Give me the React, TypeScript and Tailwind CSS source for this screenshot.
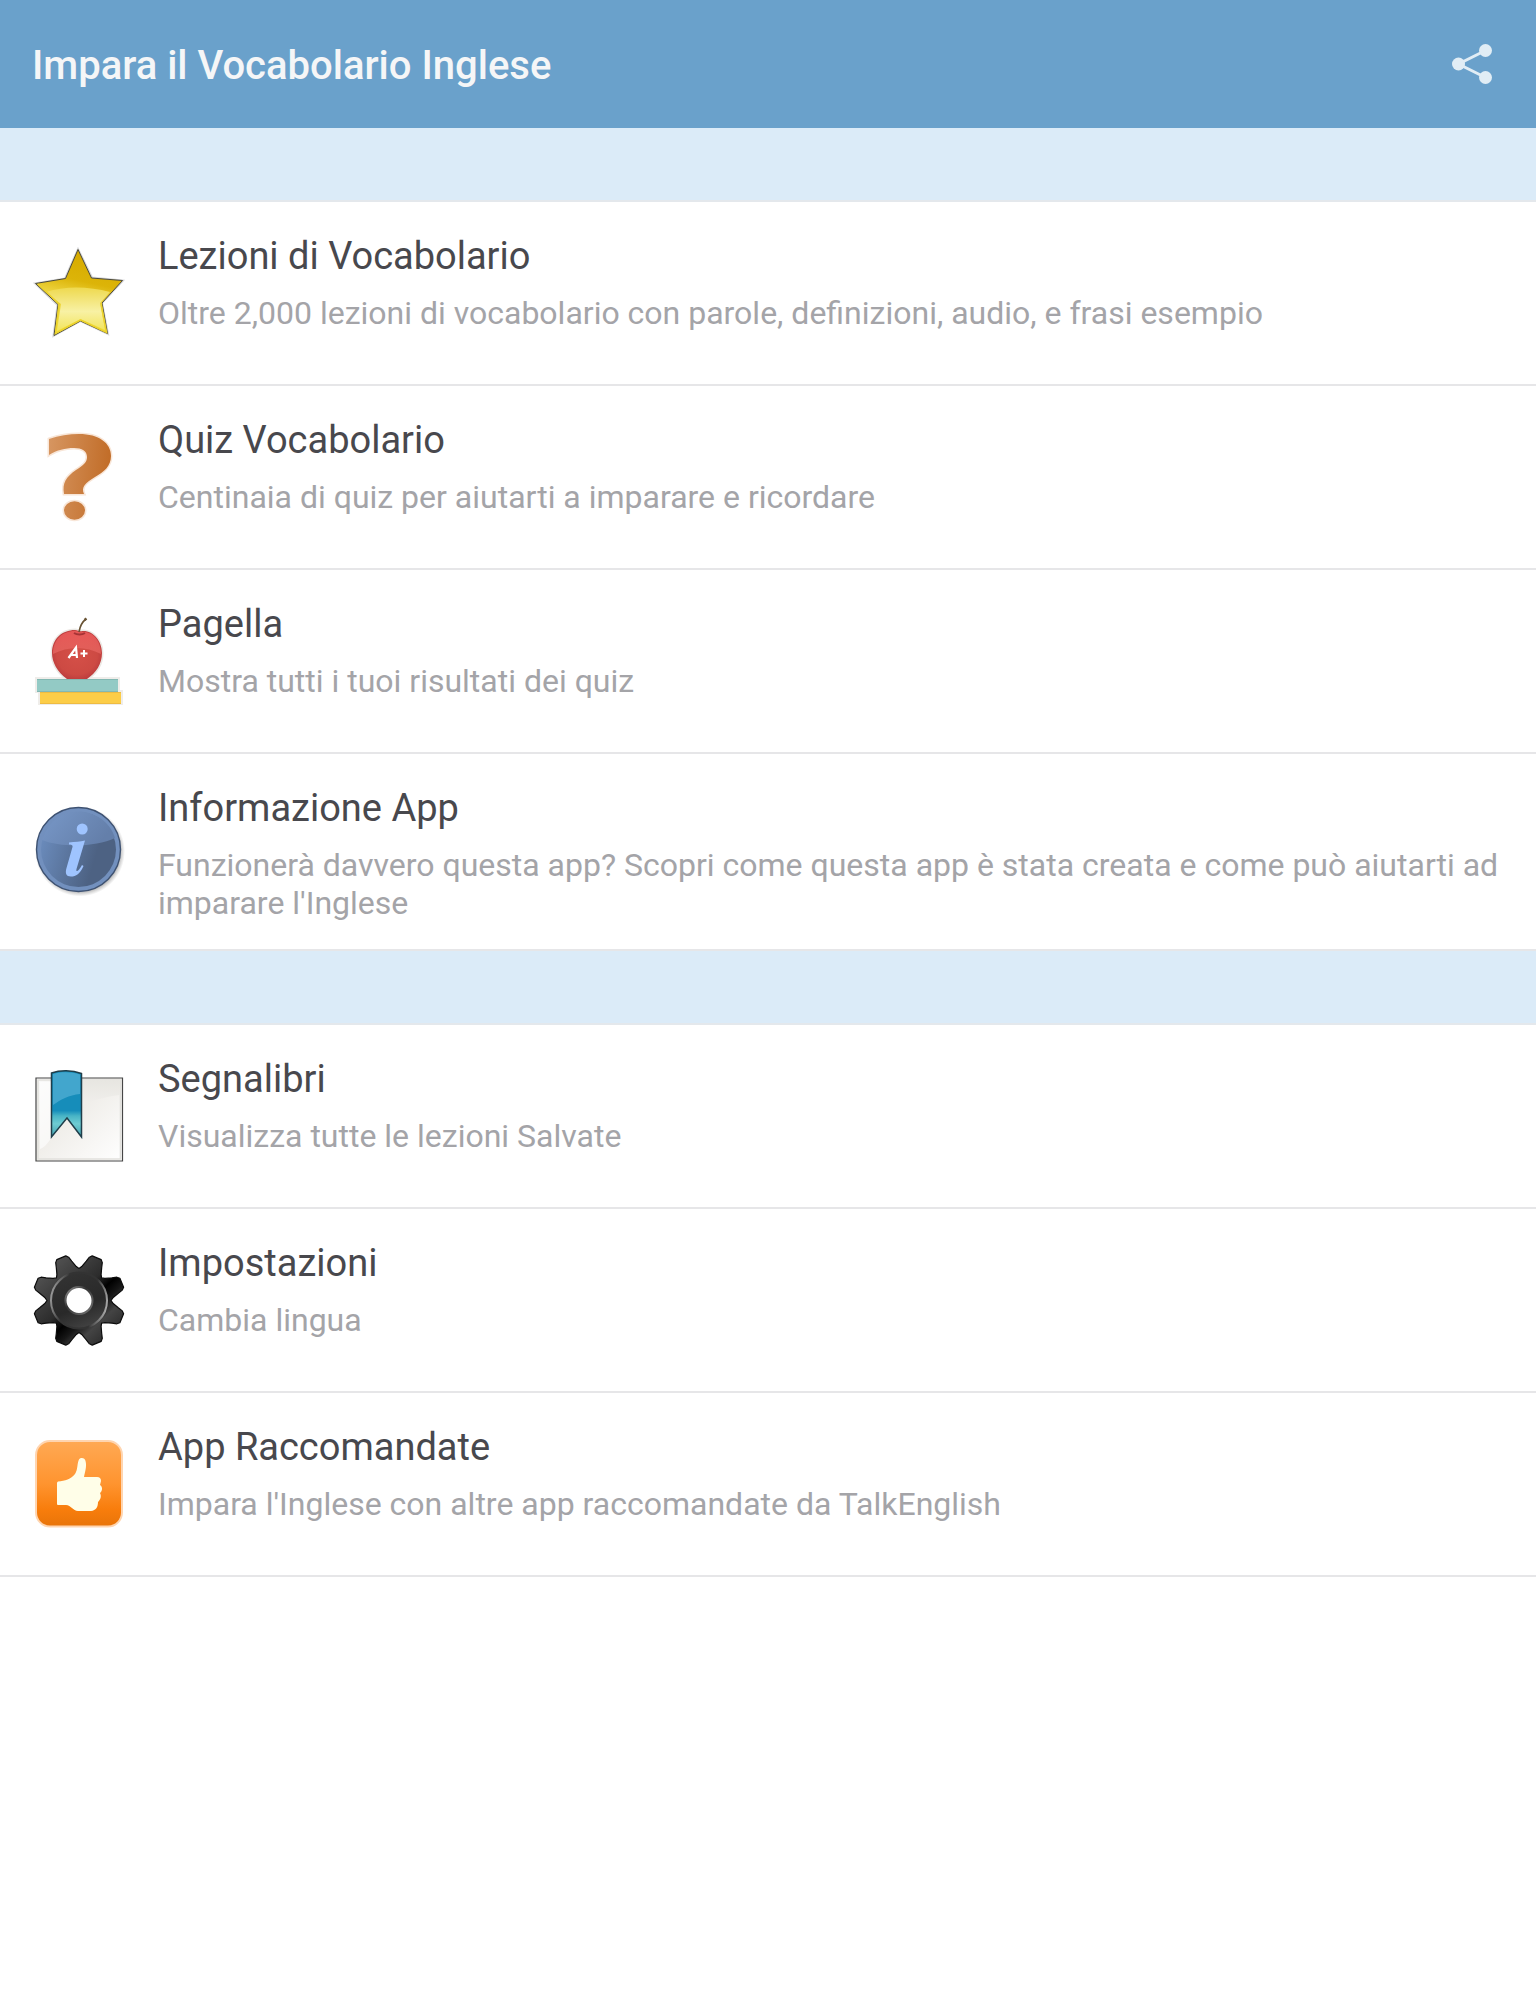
import type { ReactNode } from "react";

function StarIcon() {
  return (
    <svg viewBox="0 0 120 120" className="size-full" aria-hidden="true">
      <defs>
        <linearGradient id="starBody" x1="0.6" y1="0.1" x2="0.4" y2="1">
          <stop offset="0" stopColor="#d8ac00" />
          <stop offset="0.3" stopColor="#dcb408" />
          <stop offset="0.5" stopColor="#ecd23c" />
          <stop offset="1" stopColor="#f3e23a" />
        </linearGradient>
        <linearGradient id="starGloss" x1="0" y1="0" x2="0" y2="1">
          <stop offset="0" stopColor="#eed94f" />
          <stop offset="0.55" stopColor="#f8f1a4" />
          <stop offset="1" stopColor="#f2e45c" />
        </linearGradient>
      </defs>
      <path d="M58 14 72 42.500 103 45.500 82 68 88 99 60.500 86 33.500 101 37.500 70 15 48.500 45 43.500Z" fill="none" stroke="#bbbbc0" strokeWidth="2" opacity="0.6" />
      <path d="M58 14.500 71.500 43 102.500 45.500 82 68 87.500 98.500 60.500 86 34 100.500 38 69.500 15.500 48.500 45.500 43.500Z" fill="url(#starBody)" stroke="#4b4a3c" strokeWidth="1" />
      <path d="M26 57C44 51 68 51 90 57L80 68 85 95 60.500 84 37 96 41 69Z" fill="url(#starGloss)" />
      <path d="M81 68 86.500 97.500 60.500 85 35.500 98.500 39 69 18 49" fill="none" stroke="#ecd22c" strokeWidth="1.500" />
    </svg>
  );
}

function QuestionIcon() {
  return (
    <svg viewBox="0 -1 120 120" className="size-full" aria-hidden="true">
      <defs>
        <linearGradient id="question" gradientUnits="userSpaceOnUse" x1="28" y1="40" x2="91" y2="46">
          <stop offset="0" stopColor="#d69560" />
          <stop offset="1" stopColor="#c16c27" />
        </linearGradient>
      </defs>
      <g fill="url(#question)" stroke="#f8e6d8" strokeWidth="3" paintOrder="stroke">
        <path d="M29 19C39 15.500 49 14 59 14C79 14 91 23 91 36C91 46 84 52 75 57C65 63 61 67 64 74H44C42 63 46 57 56 50C64 45 67 42 67 37C67 31 62 28 54 28C45 28 37 30 29 35Z" />
        <ellipse cx="54.500" cy="90.500" rx="10.500" ry="9.200" />
      </g>
    </svg>
  );
}

function AppleIcon() {
  return (
    <svg viewBox="0 -1 120 120" className="size-full" aria-hidden="true">
      <defs>
        <radialGradient id="apple" cx="0.5" cy="0.5" r="0.58">
          <stop offset="0" stopColor="#d55048" />
          <stop offset="0.7" stopColor="#cd4a43" />
          <stop offset="1" stopColor="#b5373b" />
        </radialGradient>
        <linearGradient id="appleGloss" x1="0" y1="0" x2="0" y2="1">
          <stop offset="0" stopColor="#ee5c5c" />
          <stop offset="1" stopColor="#e4655f" />
        </linearGradient>
      </defs>
      <path d="M16 74H99V87H102V100H19V88H16Z" fill="#fff" stroke="#efedea" strokeWidth="2" />
      <path d="M47 75C37 68 32 58 32 49C32 35 42 26 55 26C58 26 60 28 62 27C73 26 82 37 82 49C82 60 76 69 67 75Z" fill="url(#apple)" stroke="#ebe8e4" strokeWidth="3" paintOrder="stroke" />
      <path d="M33 50C33 36 42 27 55 27C58 27 60 29 62 28C73 27 81 37 81 50C66 42 48 42 33 50Z" fill="url(#appleGloss)" opacity="0.8" />
      <path d="M54 29C57 31 62 31 65 29" fill="none" stroke="#a63335" strokeWidth="2" />
      <path d="M59 28C60 22 62 18 66 15" fill="none" stroke="#695334" strokeWidth="1.600" />
      <path d="M64.500 16 66.500 14.500" stroke="#695334" strokeWidth="2.400" />
      <path d="M48.500 54 56 43.500 57 54M51 51H57" fill="none" stroke="#fff" strokeWidth="2.200" />
      <path d="M60.500 49.500H67.500M64 46V53" stroke="#fff" strokeWidth="2" />
      <path d="M17 75H98V88H17Z" fill="#93cac5" />
      <path d="M20 88H101V100H20Z" fill="#fccd48" />
      <path d="M17 75.500H98M17 87.500H98" stroke="#83b8b2" strokeWidth="1" />
      <path d="M20 88.500H101M20 99.500H101" stroke="#eebb42" strokeWidth="1" />
    </svg>
  );
}

function InfoIcon() {
  return (
    <svg viewBox="0 -3 120 120" className="size-full" aria-hidden="true">
      <defs>
        <linearGradient id="infoDark" x1="0" y1="0.3" x2="1" y2="0.6">
          <stop offset="0" stopColor="#6b8cbd" />
          <stop offset="0.75" stopColor="#4d6283" />
          <stop offset="1" stopColor="#4d6283" />
        </linearGradient>
        <linearGradient id="infoGloss" x1="0" y1="0" x2="1" y2="0.4">
          <stop offset="0" stopColor="#7898c8" />
          <stop offset="1" stopColor="#647faa" />
        </linearGradient>
        <radialGradient id="infoShadow">
          <stop offset="0.86" stopColor="#777" stopOpacity="0.7" />
          <stop offset="1" stopColor="#999" stopOpacity="0" />
        </radialGradient>
      </defs>
      <circle cx="60" cy="61.500" r="45" fill="url(#infoShadow)" />
      <circle cx="58.500" cy="59.500" r="42" fill="#7290be" stroke="#3e5272" strokeWidth="1.400" />
      <circle cx="58.500" cy="59.500" r="37.500" fill="url(#infoDark)" />
      <path d="M22 50C27 33 41 21.500 58 21.500C75 21.500 90 32 95 48C76 57 42 58 22 50Z" fill="url(#infoGloss)" />
      <circle cx="62.200" cy="39" r="5.500" fill="#9fc4ff" />
      <path d="M49 52.500C55 52 60 51.500 65 50.500L56.500 79C55.500 83 59 81 62 75L63.500 76C60 84 56 86.500 51 86.500C46 86.500 45 83 46.500 78L52.500 57C53 55 51 54.500 49 54.500Z" fill="#9fc4ff" />
    </svg>
  );
}

function BookmarkIcon() {
  return (
    <svg viewBox="0 0 120 120" className="size-full" aria-hidden="true">
      <defs>
        <linearGradient id="page" x1="0" y1="0" x2="1" y2="1">
          <stop offset="0" stopColor="#fafafa" />
          <stop offset="0.45" stopColor="#f0eeea" />
          <stop offset="1" stopColor="#ffffff" />
        </linearGradient>
        <linearGradient id="pageCurl" x1="0" y1="0" x2="0" y2="1">
          <stop offset="0" stopColor="#e7e6e1" />
          <stop offset="1" stopColor="#f1efec" />
        </linearGradient>
        <linearGradient id="ribbon" gradientUnits="userSpaceOnUse" x1="0" y1="13" x2="0" y2="79">
          <stop offset="0" stopColor="#168dba" />
          <stop offset="0.6" stopColor="#168dba" />
          <stop offset="0.68" stopColor="#48b4c6" />
          <stop offset="0.8" stopColor="#6fccd2" />
          <stop offset="1" stopColor="#3f9fae" />
        </linearGradient>
      </defs>
      <path d="M16 20H102.500V103H16Z" fill="url(#page)" stroke="#464646" strokeWidth="1.200" />
      <path d="M18 22H100.500V101H18Z" fill="none" stroke="#e2e1dd" strokeWidth="1.600" />
      <path d="M62 22H100V37C84 39 71 43 62 47Z" fill="url(#pageCurl)" />
      <path d="M20 24H31V80C28 86 23 90 20 91Z" fill="#fff" opacity="0.6" />
      <path d="M31.500 15C40 12 52 12 61.500 15.500V79L47 60 31.500 79Z" fill="url(#ribbon)" stroke="#203e4a" strokeWidth="1.500" />
      <path d="M33 16C41 13.500 51 13.500 60 16.500V36C49 37 40 42 33 47Z" fill="#60b8db" opacity="0.6" />
    </svg>
  );
}

const GEAR_CENTER = { x: 59, y: 58.5 };

// Outline of one tooth as [degrees from its axis, radius] pairs.
const TOOTH = [
  [-22.5, 32],
  [-18, 34],
  [-12, 40],
  [-9, 44.5],
  [-6, 46.5],
  [6, 46.5],
  [9, 44.5],
  [12, 40],
  [18, 34],
];

const GEAR_POINTS = [0, 1, 2, 3, 4, 5, 6, 7]
  .flatMap((tooth) =>
    TOOTH.map(([offset, radius]) => {
      const angle = ((tooth * 45 + 22.5 + offset) * Math.PI) / 180;
      const x = GEAR_CENTER.x + radius * Math.sin(angle);
      const y = GEAR_CENTER.y - radius * Math.cos(angle);
      return `${x.toFixed(1)},${y.toFixed(1)}`;
    }),
  )
  .join(" ");

function GearIcon() {
  return (
    <svg viewBox="0 0 120 120" className="size-full" aria-hidden="true">
      <defs>
        <linearGradient id="gearBody" gradientUnits="userSpaceOnUse" x1="25" y1="22" x2="93" y2="95">
          <stop offset="0" stopColor="#555" />
          <stop offset="0.45" stopColor="#2c2c2c" />
          <stop offset="0.58" stopColor="#000" />
          <stop offset="0.68" stopColor="#161616" />
          <stop offset="0.8" stopColor="#444" />
          <stop offset="1" stopColor="#2a2a2a" />
        </linearGradient>
        <linearGradient id="gearRim" x1="0" y1="0.4" x2="1" y2="0.6">
          <stop offset="0" stopColor="#999" />
          <stop offset="0.25" stopColor="#333" />
          <stop offset="0.75" stopColor="#333" />
          <stop offset="1" stopColor="#aaa" />
        </linearGradient>
        <linearGradient id="gearFace" x1="0.3" y1="0" x2="0.7" y2="1">
          <stop offset="0" stopColor="#333" />
          <stop offset="0.6" stopColor="#292929" />
          <stop offset="1" stopColor="#444" />
        </linearGradient>
        <linearGradient id="gearHole" x1="0" y1="0" x2="1" y2="1">
          <stop offset="0" stopColor="#999" />
          <stop offset="0.4" stopColor="#333" />
          <stop offset="1" stopColor="#777" />
        </linearGradient>
      </defs>
      <polygon points={GEAR_POINTS} fill="url(#gearBody)" stroke="#0c0c0c" strokeWidth="1.200" strokeLinejoin="round" />
      <circle cx="59" cy="58.500" r="28" fill="url(#gearFace)" stroke="url(#gearRim)" strokeWidth="2" />
      <circle cx="59" cy="58.500" r="13.500" fill="#fff" stroke="url(#gearHole)" strokeWidth="2" />
    </svg>
  );
}

function ThumbIcon() {
  return (
    <svg viewBox="0 2 120 120" className="size-full" aria-hidden="true">
      <defs>
        <linearGradient id="thumbTile" x1="0" y1="0" x2="0" y2="1">
          <stop offset="0" stopColor="#ffa954" />
          <stop offset="0.5" stopColor="#ff942f" />
          <stop offset="0.8" stopColor="#f87d0c" />
          <stop offset="1" stopColor="#e87409" />
        </linearGradient>
      </defs>
      <rect x="16" y="17" width="86" height="85.500" rx="14" fill="url(#thumbTile)" stroke="#ffd5b0" strokeWidth="2" />
      <path d="M37 59Q37 58 38 57.500C45 57 51 55 55 50C58 46 57 39 59 35.500C61 33 65 34 65.500 37C67 42 65 48 64 53H77Q81 53 81 57L80 61C83 63 82.500 67 80 69C82 73 80 76 78 78C78 83 76 86.500 71 87H58C53 87 51 81 46 81H38Q37 81 37 80Z" fill="#fffee8" />
    </svg>
  );
}

function ShareIcon() {
  return (
    <svg viewBox="0 0 40 40" className="size-10" aria-hidden="true">
      <path d="M33.500 6.500 6.500 20 33.500 33.500" fill="none" stroke="#e1edf5" strokeWidth="3" />
      <g fill="#e1edf5">
        <circle cx="33.500" cy="6.500" r="6.500" />
        <circle cx="6.500" cy="20" r="6.500" />
        <circle cx="33.500" cy="33.500" r="6.500" />
      </g>
    </svg>
  );
}

type Item = { title: string; text: string; icon: ReactNode };

const LEARN: Item[] = [
  {
    title: "Lezioni di Vocabolario",
    text: "Oltre 2,000 lezioni di vocabolario con parole, definizioni, audio, e frasi esempio",
    icon: <StarIcon />,
  },
  {
    title: "Quiz Vocabolario",
    text: "Centinaia di quiz per aiutarti a imparare e ricordare",
    icon: <QuestionIcon />,
  },
  { title: "Pagella", text: "Mostra tutti i tuoi risultati dei quiz", icon: <AppleIcon /> },
  {
    title: "Informazione App",
    text: "Funzionerà davvero questa app? Scopri come questa app è stata creata e come può aiutarti ad imparare l'Inglese",
    icon: <InfoIcon />,
  },
];

const MORE: Item[] = [
  { title: "Segnalibri", text: "Visualizza tutte le lezioni Salvate", icon: <BookmarkIcon /> },
  { title: "Impostazioni", text: "Cambia lingua", icon: <GearIcon /> },
  {
    title: "App Raccomandate",
    text: "Impara l'Inglese con altre app raccomandate da TalkEnglish",
    icon: <ThumbIcon />,
  },
];

function Row({ item }: { item: Item }) {
  return (
    <li>
      <a href="#" className="flex min-h-[182px] items-start pr-8 pl-5">
        <span className="mt-[33px] size-[120px] shrink-0">{item.icon}</span>
        <span className="ml-[18px] flex min-w-0 flex-1 flex-col gap-4 pt-8 pb-[27px]">
          <span className="text-[38px] leading-[44px] text-[#48484d]">{item.title}</span>
          <span className="text-[32px] leading-[38px] text-[#a4a4a8]">{item.text}</span>
        </span>
      </a>
    </li>
  );
}

function Section({ items }: { items: Item[] }) {
  return (
    <section>
      <div className="h-[74px] border-b-2 border-[#e4e8ec] bg-[#dbebf8]" />
      <ul className="divide-y-2 divide-[#e6e6e8] border-b-2 border-[#e6e6e8]">
        {items.map((item) => (
          <Row key={item.title} item={item} />
        ))}
      </ul>
    </section>
  );
}

export default function App() {
  return (
    <div className="min-h-screen bg-white font-['Roboto',sans-serif]">
      <header className="flex h-32 items-center justify-between bg-[#6aa1cb] px-8">
        <h1 className="pt-1 text-[40px] leading-[48px] font-medium text-[#f5f6f7]">Impara il Vocabolario Inglese</h1>
        <button type="button" aria-label="Condividi" className="p-3">
          <ShareIcon />
        </button>
      </header>
      <main>
        <Section items={LEARN} />
        <Section items={MORE} />
      </main>
    </div>
  );
}
